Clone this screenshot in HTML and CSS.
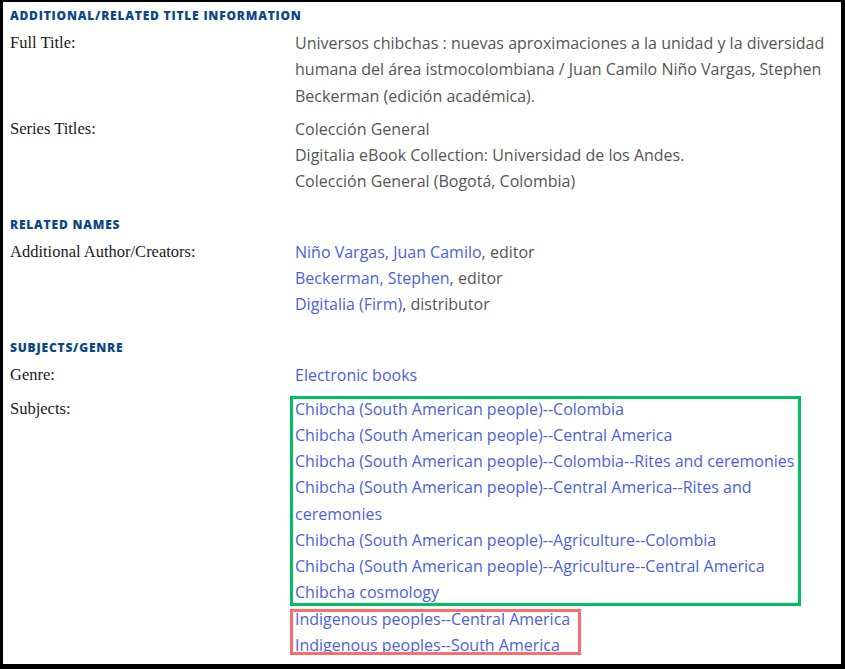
FILE: index.html
```html
<!DOCTYPE html>
<html lang="en">
<head>
    <meta charset="UTF-8">
    <title>Record Details</title>
    <link rel="stylesheet" href="styles.css">
</head>
<body>
<div class="record">
    <section class="group">
        <h2>Additional/Related Title Information</h2>
        <div class="row">
            <div class="label">Full Title:</div>
            <div class="value">Universos chibchas : nuevas aproximaciones a la unidad y la diversidad humana del área istmocolombiana / Juan Camilo Niño Vargas, Stephen Beckerman (edición académica).</div>
        </div>
        <div class="row">
            <div class="label">Series Titles:</div>
            <div class="value">
                <div>Colección General</div>
                <div>Digitalia eBook Collection: Universidad de los Andes.</div>
                <div>Colección General (Bogotá, Colombia)</div>
            </div>
        </div>
    </section>

    <section class="group">
        <h2>Related Names</h2>
        <div class="row">
            <div class="label">Additional Author/Creators:</div>
            <div class="value">
                <div><a href="#">Niño Vargas, Juan Camilo</a>, editor</div>
                <div><a href="#">Beckerman, Stephen</a>, editor</div>
                <div><a href="#">Digitalia (Firm)</a>, distributor</div>
            </div>
        </div>
    </section>

    <section class="group">
        <h2>Subjects/Genre</h2>
        <div class="row">
            <div class="label">Genre:</div>
            <div class="value"><a href="#">Electronic books</a></div>
        </div>
        <div class="row">
            <div class="label">Subjects:</div>
            <div class="value">
                <div class="mark mark-green">
                    <div><a href="#">Chibcha (South American people)--Colombia</a></div>
                    <div><a href="#">Chibcha (South American people)--Central America</a></div>
                    <div><a href="#">Chibcha (South American people)--Colombia--Rites and ceremonies</a></div>
                    <div><a href="#">Chibcha (South American people)--Central America--Rites and ceremonies</a></div>
                    <div><a href="#">Chibcha (South American people)--Agriculture--Colombia</a></div>
                    <div><a href="#">Chibcha (South American people)--Agriculture--Central America</a></div>
                    <div><a href="#">Chibcha cosmology</a></div>
                </div>
                <div class="mark mark-red">
                    <div><a href="#">Indigenous peoples--Central America</a></div>
                    <div><a href="#">Indigenous peoples--South America</a></div>
                </div>
            </div>
        </div>
    </section>
</div>
</body>
</html>
```

FILE: styles.css
```css
body {
    margin: 0;
    background: #000;
    font-family: 'Open Sans', sans-serif;
}
.record {
    background: #fff;
    margin: 2px 4px 0 3px;
    height: 662px;
    padding: 6px 0 0 7px;
    box-sizing: border-box;
}
.group + .group { margin-top: 22px; }
.group:last-child { margin-top: 23px; }
.group h2 {
    margin: 0 0 6px;
    font-size: 12px;
    line-height: 16px;
    font-weight: 800;
    letter-spacing: 0.8px;
    text-transform: uppercase;
    color: #0b4786;
}
.row {
    display: flex;
}
.row + .row { margin-top: 7px; }
.label {
    width: 285px;
    flex: none;
    font-family: 'Liberation Serif', serif;
    font-size: 16.5px;
    line-height: 26.25px;
    color: #1a1a1a;
}
.value {
    width: 530px;
    font-size: 16px;
    line-height: 26.25px;
    color: #555;
}
.value a {
    color: #4a5fe0;
    text-decoration: none;
}
.mark {
    margin-left: -5px;
    padding-left: 5px;
    box-sizing: border-box;
}
.mark-green {
    width: 511px;
    box-shadow: inset 0 0 0 3px #00c060;
}
.mark-red {
    position: relative;
    width: 291px;
}
/* highlight frame drawn over the lines without moving them */
.mark-red::before {
    content: "";
    position: absolute;
    top: 3px;
    bottom: 3px;
    left: 0;
    right: 0;
    border: 3px solid #ff6b6b;
}
```
